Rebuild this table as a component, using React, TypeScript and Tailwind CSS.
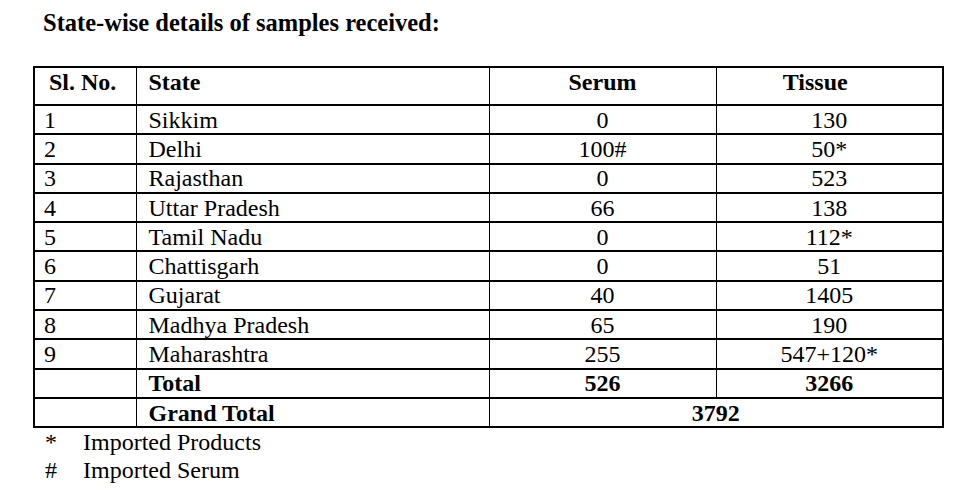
const rows = [
  { no: "1", state: "Sikkim", serum: "0", tissue: "130" },
  { no: "2", state: "Delhi", serum: "100#", tissue: "50*" },
  { no: "3", state: "Rajasthan", serum: "0", tissue: "523" },
  { no: "4", state: "Uttar Pradesh", serum: "66", tissue: "138" },
  { no: "5", state: "Tamil Nadu", serum: "0", tissue: "112*" },
  { no: "6", state: "Chattisgarh", serum: "0", tissue: "51" },
  { no: "7", state: "Gujarat", serum: "40", tissue: "1405" },
  { no: "8", state: "Madhya Pradesh", serum: "65", tissue: "190" },
  { no: "9", state: "Maharashtra", serum: "255", tissue: "547+120*" },
];

export default function App() {
  const cell = "border-x border-y-2 border-black p-0 h-[29.3px] leading-[24px] align-middle";
  const head = "border-x border-y-2 border-black p-0 pt-[2px] h-[38px] leading-[24px] align-top font-bold";
  return (
    <div className="w-[965px] h-[500px] bg-white text-black text-[24px] font-['Liberation_Serif','Times_New_Roman',serif]">
      {/* Title */}
      <div className="pl-[43px] pt-[11px] text-[24.5px] font-bold leading-[24px]">
        State-wise details of samples received:
      </div>

      {/* Table */}
      <table className="ml-[33px] mt-[31px] border-collapse border-2 border-black table-fixed w-[909px]">
        <colgroup>
          <col className="w-[102px]" />
          <col className="w-[353px]" />
          <col className="w-[227px]" />
          <col className="w-[227px]" />
        </colgroup>
        <thead>
          <tr>
            <th className={`${head} pl-[14px] text-left`}>Sl. No.</th>
            <th className={`${head} pl-[12px] text-left`}>State</th>
            <th className={`${head} text-center`}>Serum</th>
            <th className={`${head} pr-[28px] text-center`}>Tissue</th>
          </tr>
        </thead>
        <tbody>
          {rows.map((r) => (
            <tr key={r.no}>
              <td className={`${cell} pl-[9px] text-left`}>{r.no}</td>
              <td className={`${cell} pl-[12px] text-left`}>{r.state}</td>
              <td className={`${cell} text-center`}>{r.serum}</td>
              <td className={`${cell} text-center`}>{r.tissue}</td>
            </tr>
          ))}
          <tr>
            <td className={cell}></td>
            <td className={`${cell} pl-[12px] text-left font-bold`}>Total</td>
            <td className={`${cell} text-center font-bold`}>526</td>
            <td className={`${cell} text-center font-bold`}>3266</td>
          </tr>
          <tr>
            <td className={cell}></td>
            <td className={`${cell} pl-[12px] text-left font-bold`}>Grand Total</td>
            <td colSpan={2} className={`${cell} text-center font-bold`}>3792</td>
          </tr>
        </tbody>
      </table>

      {/* Footnotes */}
      <div className="leading-[28px]">
        <div className="flex">
          <span className="pl-[45px] w-[83px]">*</span>
          <span>Imported Products</span>
        </div>
        <div className="flex">
          <span className="pl-[45px] w-[83px]">#</span>
          <span>Imported Serum</span>
        </div>
      </div>
    </div>
  );
}
